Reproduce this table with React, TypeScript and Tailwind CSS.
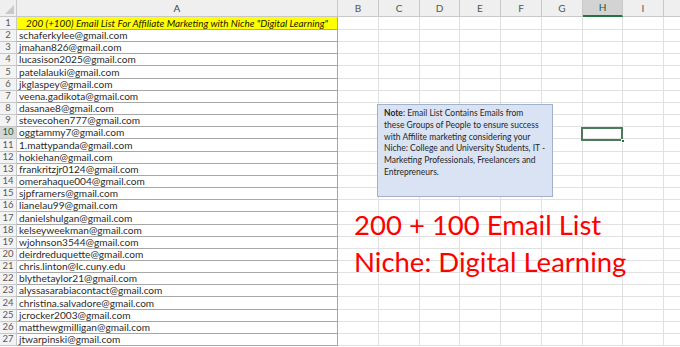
import React from "react";

const emails = [
  "schaferkylee@gmail.com",
  "jmahan826@gmail.com",
  "lucasison2025@gmail.com",
  "patelalauki@gmail.com",
  "jkglaspey@gmail.com",
  "veena.gadikota@gmail.com",
  "dasanae8@gmail.com",
  "stevecohen777@gmail.com",
  "oggtammy7@gmail.com",
  "1.mattypanda@gmail.com",
  "hokiehan@gmail.com",
  "frankritzjr0124@gmail.com",
  "omerahaque004@gmail.com",
  "sjpframers@gmail.com",
  "lianelau99@gmail.com",
  "danielshulgan@gmail.com",
  "kelseyweekman@gmail.com",
  "wjohnson3544@gmail.com",
  "deirdreduquette@gmail.com",
  "chris.linton@lc.cuny.edu",
  "blythetaylor21@gmail.com",
  "alyssasarabiacontact@gmail.com",
  "christina.salvadore@gmail.com",
  "jcrocker2003@gmail.com",
  "matthewgmilligan@gmail.com",
  "jtwarpinski@gmail.com",
];

const cols = [
  { l: "B", w: 41 },
  { l: "C", w: 41 },
  { l: "D", w: 40 },
  { l: "E", w: 41 },
  { l: "F", w: 41 },
  { l: "G", w: 41 },
  { l: "H", w: 40 },
  { l: "I", w: 41 },
  { l: "", w: 60 },
];

const font = { fontFamily: "Lato, 'Liberation Sans', sans-serif" };

function Row({ n, h, first }: { n: number; h: string; first?: boolean }) {
  const sel = n === 10;
  return (
    <div className={`flex shrink-0 ${h}`}>
      <div
        className={`w-[17px] shrink-0 flex items-end justify-center border-r border-b border-[#c8c8c8] text-[9.5px] leading-[12px] ${
          sel ? "bg-[#d6d6d6] text-[#1e5e3a]" : "bg-[#f3f3f3] text-[#5a5a5a]"
        }`}
      >
        {n}
      </div>
      {first ? (
        <div className="w-[321px] shrink-0 bg-[#ffff00] border-r border-b border-[#a6a6a6] flex items-end justify-center text-[9.9px] leading-[12px] italic text-[#202000] whitespace-nowrap overflow-hidden">
          200 (+100) Email List For Affiliate Marketing with Niche "Digital Learning"
        </div>
      ) : (
        <div className="w-[321px] shrink-0 bg-white border-r border-b border-[#a6a6a6] flex items-end pl-[2px] text-[10.1px] leading-[12px] text-[#2a2a2a] whitespace-nowrap overflow-hidden">
          {emails[n - 2]}
        </div>
      )}
      {cols.map((c, i) => (
        <div
          key={i}
          style={{ width: c.w }}
          className="shrink-0 bg-white border-r border-b border-[#e1e1e1]"
        />
      ))}
    </div>
  );
}

export default function App() {
  return (
    <div className="relative w-[680px] h-[347px] overflow-hidden bg-white select-none" style={font}>
      <div className="flex flex-col">
        {/* header */}
        <div className="flex h-[17px] shrink-0 bg-[#efefef]">
          <div className="w-[17px] shrink-0 border-r border-b border-[#c8c8c8] relative">
            <svg className="absolute right-[2px] bottom-[2px]" width="9" height="9" viewBox="0 0 9 9">
              <polygon points="9,0 9,9 0,9" fill="#c9c9c9" />
            </svg>
          </div>
          <div className="w-[321px] shrink-0 border-r border-b border-[#c8c8c8] flex items-center justify-center text-[10px] text-[#444]">
            A
          </div>
          {cols.map((c, i) => (
            <div
              key={i}
              style={{ width: c.w }}
              className={`shrink-0 border-r flex items-center justify-center text-[10px] ${
                c.l === "H"
                  ? "bg-[#d3d3d3] border-[#c8c8c8] border-b-2 border-b-[#217346] text-[#1e5e3a]"
                  : "border-b border-[#c8c8c8] text-[#555]"
              }`}
            >
              {c.l}
            </div>
          ))}
        </div>
        <Row n={1} h="h-[13px]" first />
        {emails.map((_, i) => (
          <Row key={i} n={i + 2} h="h-[12.17px]" />
        ))}
      </div>

      {/* selected cell H10 */}
      <div className="absolute left-[581px] top-[126.5px] w-[42px] h-[14px] border-2 border-[#4d7a5d]">
        <div className="absolute right-[-4px] bottom-[-4px] w-[4px] h-[4px] bg-[#217346] border border-white" />
      </div>

      {/* note box */}
      <div className="absolute left-[377px] top-[104px] w-[176px] h-[93px] bg-[#dae3f3] border border-[#a3b2cc] px-[6px] pt-[3px] text-[8.5px] leading-[11.8px] text-[#262626] whitespace-nowrap">
        <span className="font-bold">Note</span>: Email List Contains Emails from
        <br />
        these Groups of People to ensure success
        <br />
        with Affilite marketing considering your
        <br />
        Niche: College and University Students, IT -
        <br />
        Marketing Professionals, Freelancers and
        <br />
        Entrepreneurs.
      </div>

      {/* red text */}
      <div className="absolute left-[354px] top-[206px] text-[#ff0000] text-[27.5px] leading-[37px] whitespace-nowrap">
        <div>200 + 100 Email List</div>
        <div>Niche: Digital Learning</div>
      </div>
    </div>
  );
}
